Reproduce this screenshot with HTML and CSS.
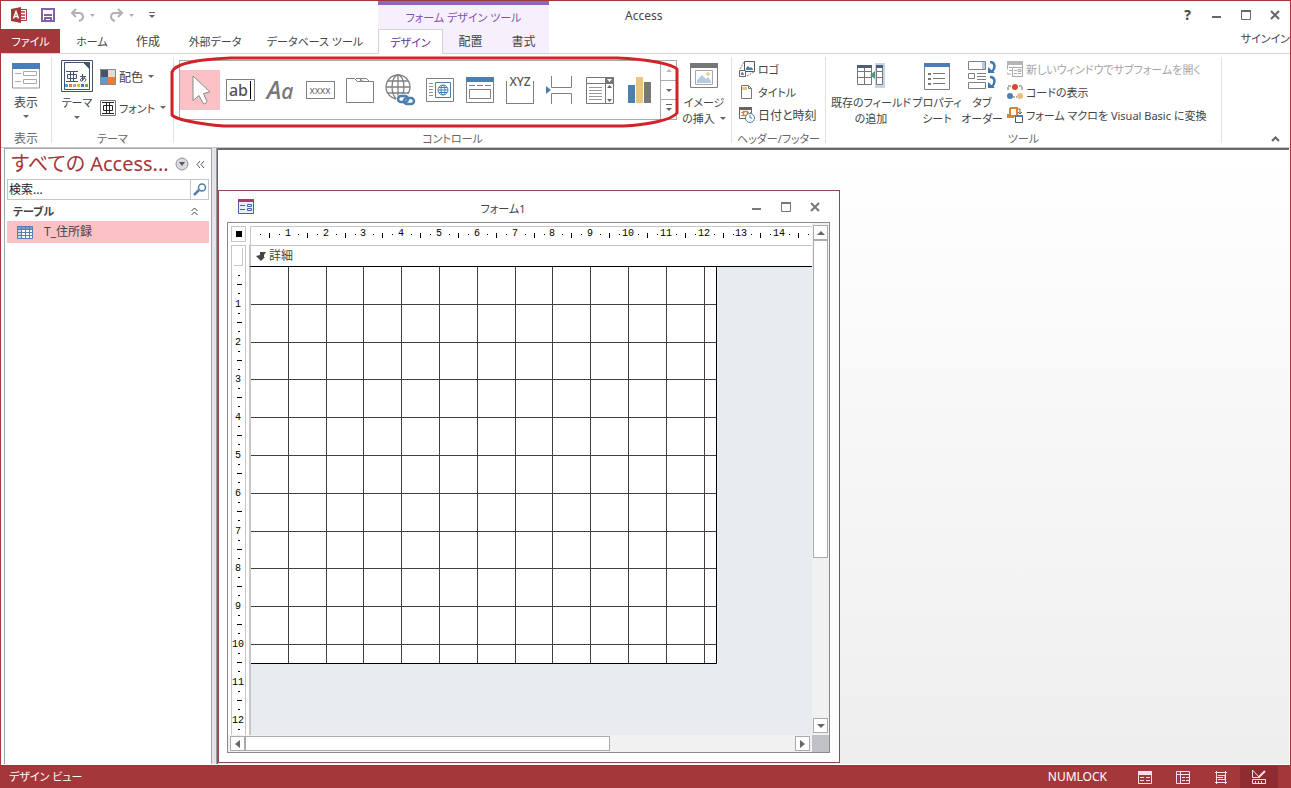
FILE: index.html
```html
<!DOCTYPE html>
<html lang="ja">
<head>
<meta charset="utf-8">
<title>Access</title>
<link rel="stylesheet" href="styles.css">
</head>
<body>
<div class="app">
<header class="header">
  <div class="header-left">
    <div class="quick">
      <svg class="logo" width="17" height="16" viewBox="0 0 17 16"><path d="M9 2.500h6.500v11H9" fill="#fff" stroke="#a4373a"/><path d="M10 5h4M10 8h4M10 11h4" stroke="#a4373a" stroke-width="1.500"/><path d="M0 2l10-2v16L0 14z" fill="#a4373a"/><path d="M2.500 11.500L5 4.500l2.500 7M3.500 9.500h3" fill="none" stroke="#fff" stroke-width="1.400"/></svg>
      <button class="tool save" aria-label="Save"><svg width="14" height="14" viewBox="0 0 14 14"><path d="M1 1h12v12H1z" fill="#fff" stroke="#8560a8" stroke-width="2"/><path d="M3 7h8M4 13V10h6v3" fill="none" stroke="#8560a8" stroke-width="2"/></svg></button>
      <button class="tool undo" aria-label="Undo"><svg width="25" height="14" viewBox="0 0 25 14"><path d="M6 1L2 5l4 4M2 5h7c3 0 4 2 4 4s-1 3-4 4" fill="none" stroke="#b0b0b0" stroke-width="2"/><path d="M20 6h5l-2.500 3z" fill="#b0b0b0"/></svg></button>
      <button class="tool redo" aria-label="Redo"><svg width="25" height="14" viewBox="0 0 25 14"><path d="M9 1l4 4-4 4M13 5H6C3 5 2 7 2 9s1 3 4 4" fill="none" stroke="#b0b0b0" stroke-width="2"/><path d="M20 6h5l-2.500 3z" fill="#b0b0b0"/></svg></button>
      <button class="tool" aria-label="Customize"><svg width="6" height="7" viewBox="0 0 6 7"><path d="M0 .500h6" stroke="#666"/><path d="M0 3h6L3 6z" fill="#666"/></svg></button>
    </div>
    <nav class="tabs">
      <button class="tab file">ファイル</button>
      <button class="tab home">ホーム</button>
      <button class="tab create">作成</button>
      <button class="tab external">外部データ</button>
      <button class="tab database">データベース ツール</button>
    </nav>
  </div>
  <div class="context">
    <div class="context-title">フォーム デザイン ツール</div>
    <nav class="tabs context-tabs">
      <button class="tab design">デザイン</button>
      <button class="tab arrange">配置</button>
      <button class="tab format">書式</button>
    </nav>
  </div>
  <div class="header-right">
    <div class="title-row">
      <h1 class="app-title">Access</h1>
      <div class="window-buttons">
        <button class="tool help" aria-label="Help">?</button>
        <button class="tool" aria-label="Minimize"><svg width="10" height="12" viewBox="0 0 10 12"><path d="M0 8h9" stroke="#666" stroke-width="2"/></svg></button>
        <button class="tool" aria-label="Maximize"><svg width="10" height="10" viewBox="0 0 10 10"><path d="M.500 .500h9v9h-9z" fill="none" stroke="#666"/><path d="M0 1h10" stroke="#666" stroke-width="2"/></svg></button>
        <button class="tool" aria-label="Close"><svg width="10" height="10" viewBox="0 0 10 10"><path d="M1 1l8 8M9 1L1 9" stroke="#666" stroke-width="2"/></svg></button>
      </div>
    </div>
    <div class="signin-row"><a class="signin" href="#">サインイン</a></div>
  </div>
</header>

<section class="ribbon">
  <div class="group view-group">
    <div class="group-body">
      <button class="big"><svg width="28" height="26" viewBox="0 0 28 26"><path d="M.500 1h27v24H.500z" fill="#fff" stroke="#999"/><path d="M0 0h28v6H0z" fill="#4a7ebb"/><path d="M11.500 8.500h13v4h-13zM11.500 16.500h13v4h-13zM3 10.500h6M3 18.500h6" fill="none" stroke="#aaa"/></svg><span>表示</span><i class="caret"></i></button>
    </div>
    <div class="group-label">表示</div>
  </div>
  <div class="group theme-group">
    <div class="group-body">
      <button class="big theme"><svg width="32" height="32" viewBox="0 0 32 32"><path d="M.500 .500h31v31H.500z" fill="#fff" stroke="#44546a"/><path d="M3.500 2.500h19l6 6v21h-25z" fill="#fff" stroke="#44546a"/><path d="M22 2h7v8z" fill="#44546a"/><path d="M5 11.500h12M5 21.500h12M9.500 11.500v10M12.500 11.500v10M6.500 14.500h9v4h-9z" fill="none" stroke="#44546a"/><path d="M19 16.500h6M21.500 14v7c-3 1-3-3 1-3 3 0 3 3 1 3.500M24 17l-3 4" fill="none" stroke="#44546a"/><path d="M4 24h3v3H4z" fill="#5b9bd5"/><path d="M8 24h3v3H8z" fill="#ed7d31"/><path d="M12 24h3v3h-3z" fill="#a5a5a5"/><path d="M16 24h3v3h-3z" fill="#e7b737"/><path d="M20 24h3v3h-3z" fill="#4472c4"/><path d="M24 24h3v3h-3z" fill="#70ad47"/></svg><span>テーマ</span><i class="caret"></i></button>
      <div class="list theme-list">
        <button class="row"><svg width="16" height="16" viewBox="0 0 16 16"><path d="M0 0h8v8H0z" fill="#44546a"/><path d="M8 0h8v8H8z" fill="#dcdcdc"/><path d="M0 8h8v8H0z" fill="#5b9bd5"/><path d="M8 8h8v8H8z" fill="#ed7d31"/><path d="M.500 .500h15v15H.500z" fill="none" stroke="#8a8a8a"/></svg><span class="kanji">配色</span><i class="caret"></i></button>
        <button class="row"><svg width="16" height="16" viewBox="0 0 16 16"><path d="M.500 .500h15v15H.500z" fill="#fff" stroke="#777"/><path d="M2 2.500h12M2 13.500h12M6.500 3v10M9.500 3v10M3.500 5.500h9v5h-9z" fill="none" stroke="#222"/></svg><span>フォント</span><i class="caret"></i></button>
      </div>
    </div>
    <div class="group-label">テーマ</div>
  </div>
  <div class="group controls-group">
    <div class="group-body">
      <div class="gallery">
        <button class="cell selected" aria-label="Select"><svg width="28" height="32" viewBox="0 0 28 32"><path d="M7 2l17 16-6.500 1.500 3.500 8q-2 4-4 1.500l-4-7.500-6 5z" fill="#fff" stroke="#8a8a8a"/></svg></button>
        <button class="cell"><span class="ctl-box ctl-ab">ab<i class="ibeam"></i></span></button>
        <button class="cell"><span class="ctl-aa">A<small>a</small></span></button>
        <button class="cell"><span class="ctl-box ctl-x">xxxx</span></button>
        <button class="cell" aria-label="Tab control"><svg width="28" height="26" viewBox="0 0 28 26"><path d="M.500 25.500V1.500h8l3 3h3v-3h6l3 3h-9M23 4.500h4.500v21H.500" fill="none" stroke="#808080"/><path d="M10 1.500h4l3 3" fill="none" stroke="#808080"/></svg></button>
        <button class="cell" aria-label="Link"><svg width="32" height="32" viewBox="0 0 32 32"><g fill="none" stroke="#808080" stroke-width="1.300"><circle cx="14" cy="13" r="12"/><ellipse cx="14" cy="13" rx="6" ry="12"/><path d="M14 1v24M2 13h24M4 7h20M4 19h20"/></g><rect x="12" y="20" width="20" height="12" rx="6" fill="#fff"/><g fill="none" stroke="#4a7fb0" stroke-width="2.500"><rect x="14" y="22" width="10" height="6" rx="3"/><rect x="20" y="24" width="10" height="6" rx="3"/></g></svg></button>
        <button class="cell" aria-label="Web browser control"><svg width="28" height="24" viewBox="0 0 28 24"><path d="M.500 .500h27v23H.500z" fill="none" stroke="#808080"/><path d="M3 5.500h4M3 8.500h4M3 11.500h4M3 14.500h4M3 17.500h4" stroke="#909090"/><path d="M9.500 4.500h15v15h-15z" fill="#fff" stroke="#4a7fb0"/><g fill="none" stroke="#4a7fb0"><circle cx="17" cy="12" r="5"/><ellipse cx="17" cy="12" rx="2" ry="5"/><path d="M12 12h10M13 9.500h8M13 14.500h8"/></g></svg></button>
        <button class="cell" aria-label="Navigation control"><svg width="28" height="26" viewBox="0 0 28 26"><path d="M.500 .500h27v25H.500z" fill="#fff" stroke="#808080"/><path d="M0 0h28v5H0z" fill="#4a7fb0"/><path d="M3 8.500h6M11 8.500h6M19 8.500h6M3.500 12.500h21v9h-21z" fill="none" stroke="#808080"/></svg></button>
        <button class="cell"><span class="ctl-frame"><span class="ctl-frame-label">XYZ</span></span></button>
        <button class="cell" aria-label="Page break"><svg class="page-break" width="26" height="28" viewBox="0 0 26 28"><path d="M5.500 0v11.500h20V0M5.500 28V17.500h20V28" fill="none" stroke="#808080"/><path d="M0 10l5 4-5 4z" fill="#4a7fb0"/></svg></button>
        <button class="cell" aria-label="Combo box"><svg width="28" height="27" viewBox="0 0 28 27"><path d="M.500 .500h27v26H.500zM0 6.500h28M19.500 0v27" fill="#fff" stroke="#777"/><path d="M3 10.500h13M3 13.500h13M3 16.500h13M3 19.500h13M3 22.500h13" stroke="#999"/><path d="M20 0h8v6h-8z" fill="#777"/><path d="M21 2h5l-2.500 3z" fill="#fff"/><path d="M21 11h5l-2.500-3zM21 22h5l-2.500 3z" fill="#666"/></svg></button>
        <button class="cell" aria-label="Chart"><svg width="24" height="26" viewBox="0 0 24 26"><path d="M0 8h7v18H0z" fill="#4a7fb0"/><path d="M8 0h7v26H8z" fill="#e8c77d"/><path d="M16 5h7v21h-7z" fill="#777"/></svg></button>
        <div class="gallery-scroll">
          <button aria-label="Scroll up"><i class="caret up faint"></i></button>
          <button aria-label="Scroll down"><i class="caret"></i></button>
          <button aria-label="More"><i class="caret more"></i></button>
        </div>
        <svg class="callout" width="512" height="76" viewBox="0 0 512 76"><path d="M3 17C6 8 32 4 62 3H448C478 4 503 9 508 14V58C503 65 478 70 454 71H55C28 69 6 64 3 60Z" fill="none" stroke="#d2232a" stroke-width="3"/></svg>
      </div>
      <button class="big image"><svg width="28" height="25" viewBox="0 0 28 25"><path d="M.500 .500h27v24H.500z" fill="#fff" stroke="#808080"/><path d="M0 0h28v5H0z" fill="#777"/><path d="M5.500 7.500h17v14h-17z" fill="#fff" stroke="#aaa"/><path d="M7 20v-3l5-5 4 4 2-2 3 4v2z" fill="#b8cae0"/><circle cx="18" cy="11" r="2" fill="#ecd59a"/></svg><span>イメージ</span><span>の挿入<i class="caret inline"></i></span></button>
    </div>
    <div class="group-label">コントロール</div>
  </div>
  <div class="group header-group">
    <div class="group-body">
      <div class="list">
        <button class="row"><svg width="16" height="16" viewBox="0 0 16 16"><path d="M5.500 .500h10v10h-10z" fill="#fff" stroke="#555"/><path d="M7 9V7l2-2 2 2 1-1 2 2v1z" fill="#4a7fb0"/><path d="M.500 9.500h6v6h-6z" fill="#fff" stroke="#666"/><path d="M2 14v-2l2-1 1 3z" fill="#4a7fb0"/><path d="M1 8l4-7M8 15l7-4" stroke="#777" stroke-dasharray="2 1"/></svg><span>ロゴ</span></button>
        <button class="row"><svg width="16" height="16" viewBox="0 0 16 16"><path d="M2.500 1.500h7l3 3v10h-10z" fill="#fff" stroke="#777"/><path d="M9.500 1.500v3h3" fill="none" stroke="#777"/><path d="M3 3h5v3H3z" fill="#e8c77d"/></svg><span>タイトル</span></button>
        <button class="row"><svg width="16" height="16" viewBox="0 0 16 16"><path d="M.500 .500h12v11H.500z" fill="#fff" stroke="#666"/><path d="M0 0h13v3H0z" fill="#666"/><path d="M2 5.500h10M2 8.500h10" stroke="#999" stroke-dasharray="2 1"/><path d="M4.500 4.500h4v4h-4z" fill="#fff" stroke="#dd8133" stroke-width="1.500"/><circle cx="11" cy="11" r="4.500" fill="#fff" stroke="#4a7fb0"/><path d="M11 8v3h2" fill="none" stroke="#4a7fb0"/></svg><span class="kanji">日付と時刻</span></button>
      </div>
    </div>
    <div class="group-label">ヘッダー/フッター</div>
  </div>
  <div class="group tools-group">
    <div class="group-body">
      <button class="big field"><svg width="28" height="25" viewBox="0 0 28 25"><path d="M18 0h10v25H18z" fill="#c5d6e8"/><path d="M.500 2.500h14v19H.500zM.500 8.500h14M.500 14.500h14M7.500 3v18M19.500 2.500h6v19h-6zM19 8.500h7M19 14.500h7" fill="#fff" stroke="#777"/><path d="M0 2h15v3H0zM19 2h7v3h-7z" fill="#4c5f75"/><path d="M13 12l5-4v8z" fill="#4d9a78"/></svg><span>既存のフィールド</span><span>の追加</span></button>
      <button class="big property"><svg width="26" height="27" viewBox="0 0 26 27"><path d="M.500 .500h25v26H.500z" fill="#fff" stroke="#808080"/><path d="M0 0h26v4H0z" fill="#4a7ebb"/><path d="M9 10.500h12M9 15.500h12M9 20.500h12" stroke="#777"/><path d="M4 10h3v2H4zM4 15h3v2H4zM4 20h3v2H4z" fill="#777"/></svg><span>プロパティ</span><span>シート</span></button>
      <button class="big order"><svg width="28" height="28" viewBox="0 0 28 28"><path d="M.500 .500h17v8H.500zM.500 12.500h6v5h-6zM.500 21.500h17v6H.500zM9 12.500h9M9 15.500h9M9 18.500h9" fill="#fff" stroke="#808080"/><path d="M14 1h3v7h-3z" fill="#b8cae0"/><path d="M22 1c5 0 6 5 2 10M22 16c5 0 6 5 2 10" fill="none" stroke="#3f77b0" stroke-width="2.500"/><path d="M20 6v6h7zM20 21v6h7z" fill="#3f77b0"/></svg><span>タブ</span><span>オーダー</span></button>
      <div class="list">
        <button class="row" disabled><svg width="16" height="16" viewBox="0 0 16 16"><path d="M.500 .500h15v12M.500 .500v8M5 15.500h10.500V6.500H5.500v9" fill="none" stroke="#aaa"/><path d="M0 0h16v4H0z" fill="#b5b5b5"/><path d="M2 6.500h3M2 9.500h3M7 9.500h3M11 8.500h3v2h-3zM7 12.500h3M11 12.500h3M0 11v2h4" fill="none" stroke="#aaa"/></svg><span>新しいウィンドウでサブフォームを開く</span></button>
        <button class="row"><svg width="16" height="16" viewBox="0 0 16 16"><path d="M4 2H1v5M12 2h3v5M5 13h5" fill="none" stroke="#666" stroke-dasharray="3 1"/><circle cx="8" cy="3" r="3" fill="#d6492e"/><circle cx="3" cy="12" r="3" fill="#4a7fb0"/><circle cx="13" cy="12" r="3" fill="#e8bd7d"/></svg><span>コードの表示</span></button>
        <button class="row"><svg width="16" height="16" viewBox="0 0 16 16"><path d="M3 1h7v8H2M3 1v7H0v2h7" fill="none" stroke="#dd8133" stroke-width="2"/><path d="M11 2h2v4M11 5l2 2 2-2" fill="none" stroke="#666"/><path d="M8.500 8.500h7v7h-7z" fill="#fff" stroke="#555"/><path d="M8 8h8v2H8z" fill="#4a7fb0"/></svg><span>フォーム マクロを Visual Basic に変換</span></button>
      </div>
    </div>
    <div class="group-label">ツール</div>
  </div>
  <button class="tool collapse" aria-label="Collapse ribbon"><svg width="9" height="6" viewBox="0 0 9 6"><path d="M1 5l3.500-3.500L8 5" fill="none" stroke="#666" stroke-width="2"/></svg></button>
</section>

<main class="workspace">
  <aside class="nav">
    <div class="nav-head">
      <h2 class="nav-title">すべての Access...</h2>
      <button class="tool" aria-label="Choose category"><svg width="14" height="14" viewBox="0 0 14 14"><circle cx="7" cy="7" r="6" fill="#d9d9df" stroke="#92929a"/><path d="M4 5h6L7 9z" fill="#555"/></svg></button>
      <button class="tool" aria-label="Close pane"><svg width="9" height="9" viewBox="0 0 9 9"><path d="M4 1L1 4.500 4 8M8 1L5 4.500 8 8" fill="none" stroke="#555"/></svg></button>
    </div>
    <div class="search">
      <input class="search-input" type="text" placeholder="検索..." aria-label="検索">
      <button class="search-button" aria-label="Search"><svg width="14" height="13" viewBox="0 0 14 13"><circle cx="9" cy="4.500" r="3.500" fill="#fff" stroke="#4a7fb0" stroke-width="1.500"/><path d="M6 7l-5 5" stroke="#4a7fb0" stroke-width="2.500"/></svg></button>
    </div>
    <button class="category"><span>テーブル</span><svg width="7" height="9" viewBox="0 0 7 9"><path d="M.500 4l3-3 3 3M.500 8l3-3 3 3" fill="none" stroke="#444"/></svg></button>
    <button class="object"><svg width="16" height="13" viewBox="0 0 16 13"><path d="M0 0h16v13H0z" fill="#fff"/><path d="M0 0h16v4H0z" fill="#7f9ccc"/><path d="M0 4h4v9H0z" fill="#c9d8ef"/><path d="M.500 .500h15v12H.500zM0 3.500h16M0 6.500h16M0 9.500h16M4.500 0v13M8.500 0v13M12.500 0v13" fill="none" stroke="#5b7db5"/></svg><span>T_住所録</span></button>
  </aside>
  <div class="splitter"></div>
  <div class="mdi">
    <section class="form-window">
      <div class="form-title">
        <svg class="form-icon" width="16" height="15" viewBox="0 0 16 15"><path d="M.500 .500h15v14H.500z" fill="#e9effa" stroke="#4a62a8"/><path d="M0 0h16v3H0z" fill="#b0395c"/><path d="M2 6.500h5M2 10.500h5M9.500 5.500h4v2h-4zM9.500 9.500h4v2h-4z" fill="none" stroke="#4a62a8"/></svg>
        <span class="form-name">フォーム1</span>
        <div class="form-buttons">
          <button class="tool" aria-label="Minimize form"><svg width="10" height="12" viewBox="0 0 10 12"><path d="M0 8h9" stroke="#777" stroke-width="2"/></svg></button>
          <button class="tool" aria-label="Maximize form"><svg width="10" height="10" viewBox="0 0 10 10"><path d="M.500 .500h9v9h-9z" fill="none" stroke="#777"/><path d="M0 1h10" stroke="#777" stroke-width="2"/></svg></button>
          <button class="tool" aria-label="Close form"><svg width="10" height="10" viewBox="0 0 10 10"><path d="M1 1l8 8M9 1L1 9" stroke="#777" stroke-width="2"/></svg></button>
        </div>
      </div>
      <div class="form-frame">
        <div class="select-corner"><i></i></div>
        <div class="ruler-top">
          <svg width="562" height="18" viewBox="0 2 562 18"><defs><path id="h" d="M9 9.500h1M18.500 8v5M28 9.500h1" fill="none" stroke="#000"/></defs>
          <use href="#h"/><use href="#h" x="38"/><use href="#h" x="76"/><use href="#h" x="113"/><use href="#h" x="151"/><use href="#h" x="189"/><use href="#h" x="227"/><use href="#h" x="265"/><use href="#h" x="302"/><use href="#h" x="340"/><use href="#h" x="378"/><use href="#h" x="416"/><use href="#h" x="454"/><use href="#h" x="491"/><use href="#h" x="529"/>
          <g class="ruler-text"><text x="37" y="11">1</text><text x="75" y="11">2</text><text x="112" y="11">3</text><text x="150" y="11">4</text><text x="188" y="11">5</text><text x="226" y="11">6</text><text x="264" y="11">7</text><text x="301" y="11">8</text><text x="339" y="11">9</text><text x="377" y="11">10</text><text x="415" y="11">11</text><text x="453" y="11">12</text><text x="490" y="11">13</text><text x="528" y="11">14</text></g></svg>
        </div>
        <div class="section-selector"><i></i></div>
        <div class="section-bar"><svg width="10" height="9" viewBox="0 0 10 9"><path d="M4 0h6L8 3v2h1L5 9 0 4l4-1z" fill="#444"/></svg><span>詳細</span></div>
        <div class="ruler-side">
          <svg width="14" height="468" viewBox="0 1 14 468"><defs><path id="v" d="M6 9.500h2M5 18.500h5M6 27.500h2" fill="none" stroke="#000"/></defs>
          <use href="#v"/><use href="#v" y="38"/><use href="#v" y="76"/><use href="#v" y="113"/><use href="#v" y="151"/><use href="#v" y="189"/><use href="#v" y="227"/><use href="#v" y="265"/><use href="#v" y="302"/><use href="#v" y="340"/><use href="#v" y="378"/><use href="#v" y="416"/><path d="M6 463.500h2" stroke="#000"/>
          <g class="ruler-text"><text x="6" y="41">1</text><text x="6" y="79">2</text><text x="6" y="116">3</text><text x="6" y="154">4</text><text x="6" y="192">5</text><text x="6" y="230">6</text><text x="6" y="268">7</text><text x="6" y="305">8</text><text x="6" y="343">9</text><text x="6" y="381">10</text><text x="6" y="419">11</text><text x="6" y="457">12</text></g></svg>
        </div>
        <div class="canvas">
          <svg width="466" height="397" viewBox="1 1 466 397"><path d="M0 0h467v398H0z" fill="#fff"/><path d="M38.500 0v398M76.500 0v398M113.500 0v398M151.500 0v398M189.500 0v398M227.500 0v398M265.500 0v398M302.500 0v398M340.500 0v398M378.500 0v398M416.500 0v398M454.500 0v398M0 38.500h467M0 76.500h467M0 113.500h467M0 151.500h467M0 189.500h467M0 227.500h467M0 265.500h467M0 302.500h467M0 340.500h467M0 378.500h467" fill="none" stroke="#404040"/><path d="M0 397.500h466.500V0" fill="none" stroke="#000"/></svg>
        </div>
        <div class="vscroll"><button class="scroll-button" aria-label="Up"><i class="caret up wide"></i></button><div class="vthumb"></div><button class="scroll-button" aria-label="Down"><i class="caret wide"></i></button></div>
        <div class="hscroll"><button class="scroll-button" aria-label="Left"><svg width="5" height="8" viewBox="0 0 5 8"><path d="M5 0v8L0 4z" fill="#666"/></svg></button><div class="hthumb"></div><button class="scroll-button" aria-label="Right"><svg width="5" height="8" viewBox="0 0 5 8"><path d="M0 0v8l5-4z" fill="#666"/></svg></button></div>
        <div class="grip"></div>
      </div>
    </section>
  </div>
</main>

<footer class="status">
  <span class="status-view">デザイン ビュー</span>
  <span class="numlock">NUMLOCK</span>
  <button class="view-button" aria-label="Form view"><svg width="14" height="13" viewBox="0 0 14 13"><path d="M.500 .500h13v12H.500z" fill="none" stroke="#fde"/><path d="M0 0h14v4H0z" fill="#fde"/><path d="M2 6.500h4M8 6.500h4M2 9.500h4M8 9.500h4" stroke="#fde"/></svg></button>
  <button class="view-button" aria-label="Datasheet view"><svg width="14" height="13" viewBox="0 0 14 13"><path d="M.500 .500h13v12H.500zM0 3.500h14M4.500 0v13M6 6.500h3M10 6.500h3M6 9.500h3M10 9.500h3" fill="none" stroke="#fde"/></svg></button>
  <button class="view-button" aria-label="Layout view"><svg width="12" height="13" viewBox="0 0 12 13"><path d="M1.500 0v13M10.500 0v13M0 1.500h12M0 11.500h12M3 4.500h7v4H3M1 6.500h7" fill="none" stroke="#fde"/></svg></button>
  <button class="view-button current" aria-label="Design view"><svg width="14" height="14" viewBox="0 0 14 14"><path d="M.500 0v7.500h7zM.500 9.500h13v4H.500zM3.500 11v2M6.500 11v2M9.500 11v2" fill="none" stroke="#fde"/><path d="M13 1L7 7" stroke="#fde" stroke-width="2"/></svg></button>
</footer>
</div>
</body>
</html>
```
FILE: styles.css
```css
* { box-sizing: border-box; }
body {
  margin: 0;
  font: 12px/16px "Noto Sans", "Noto Sans CJK JP", sans-serif;
  font-feature-settings: "palt";
  color: #444;
}
button, input { font: inherit; font-feature-settings: inherit; color: inherit; }
button { display: flex; align-items: center; justify-content: center; margin: 0; padding: 0; border: 0; background: none; white-space: nowrap; }
svg { display: block; flex: none; }
h1, h2 { margin: 0; font-weight: 400; }

.app { display: flex; flex-direction: column; min-height: 100vh; border: solid #a4373a; border-width: 1px 1px 0; background: #fff; overflow: hidden; }

/* title bar and tabs */
.header { display: flex; height: 53px; flex: none; }
.header-left { display: flex; flex-direction: column; width: 377px; flex: none; }
.quick { display: flex; align-items: center; height: 28px; padding-left: 10px; }
.save { margin-left: 13px; }
.undo { margin-left: 15px; }
.redo { margin: 0 15px 0 14px; }
.tabs { display: flex; height: 25px; border-bottom: 1px solid #d4d4d4; font-size: 11px; }
.tab { flex: none; height: 24px; padding-top: 2px; }
.file { width: 59px; margin-right: 2px; background: #a4373a; color: #fff; }
.home { width: 60px; }
.create { width: 52px; font-size: 12px; }
.external { width: 82px; }
.database { width: 118px; }
.context { display: flex; flex-direction: column; width: 171px; flex: none; background: #f5f0fb; border-top: 4px solid #9264bd; }
.context-title { height: 24px; line-height: 26px; font-size: 11px; text-align: center; color: #8551b0; }
.design { width: 65px; height: 25px; border: 1px solid #d4d4d4; border-bottom: 0; background: #fff; color: #6b2f98; }
.arrange { width: 55px; font-size: 12px; }
.format { width: 51px; font-size: 12px; }
.header-right { display: flex; flex-direction: column; flex: 1; border-bottom: 1px solid #d4d4d4; }
.title-row { display: flex; justify-content: space-between; height: 28px; padding: 0 10px 0 76px; }
.app-title { font-size: 12px; line-height: 30px; }
.window-buttons, .form-buttons { display: flex; align-items: center; gap: 19px; }
.help { font-weight: 700; font-size: 14px; margin-right: 2px; }
.signin-row { display: flex; justify-content: flex-end; line-height: 20px; font-size: 11px; }
.signin { color: inherit; text-decoration: none; }

/* ribbon */
.ribbon { display: flex; height: 94px; flex: none; border-bottom: 1px solid #c8c8c8; font-size: 11px; }
.kanji, .view-group { font-size: 12px; }
.group { display: flex; flex-direction: column; margin: 3px 0 4px; border-right: 1px solid #e1e1e1; flex: none; }
.group-body { display: flex; flex: 1; }
.group-label { height: 16px; margin-bottom: -4px; text-align: center; white-space: nowrap; color: #666; }
.view-group { width: 51px; }
.theme-group { width: 122px; }
.controls-group { width: 558px; }
.header-group { width: 94px; }
.header-group .group-body { padding-left: 7px; }
.tools-group { width: 396px; }
.tools-group .group-body { padding-left: 4px; }
.big { flex-direction: column; justify-content: flex-start; padding-top: 6px; align-self: flex-start; flex: none; }
.big svg { margin-bottom: 6px; }
.view-group .big { width: 50px; }
.view-group .caret, .theme .caret { margin-top: 4px; }
.theme { width: 34px; margin-left: 8px; padding-top: 3px; }
.theme .caret { margin-top: 5px; }
.theme svg { margin-bottom: 3px; }
.image { width: 54px; }
.image svg { margin-bottom: 7px; }
.field { width: 82px; }
.property { width: 50px; }
.field svg { margin-bottom: 7px; }
.property svg { margin-bottom: 5px; }
.order { width: 40px; padding-top: 4px; }
.list { display: flex; flex-direction: column; flex: 1; }
.row { justify-content: flex-start; height: 23px; gap: 3px; }
.row span { padding-top: 2px; }
.row .caret { margin-left: 2px; }
.row:disabled { color: #a6a6a6; }
.theme-list { padding: 4px 0 0 6px; }
.theme-list .row { height: 31px; }
.tools-group .list { padding-left: 5px; }
.caret { width: 0; height: 0; border: solid transparent; border-width: 3px 3px 0; border-top-color: #666; flex: none; }
.caret.up { border-width: 0 3px 3px; border-bottom-color: #666; }
.caret.wide { border-left-width: 4px; border-right-width: 4px; }
.caret.wide:not(.up) { border-top-width: 4px; }
.caret.wide.up { border-bottom-width: 4px; }
.caret.faint { border-bottom-color: #bbb; }
.caret.inline { display: inline-block; margin: 0 0 3px 5px; }
.caret.more { box-shadow: 0 -3px #fff, 0 -4px #666; }
.collapse { align-self: flex-end; margin: 0 10px 5px auto; }

/* control gallery */
.gallery { position: relative; display: flex; align-items: center; width: 498px; height: 60px; margin: 3px 0 0 5px; border: 1px solid #ababab; flex: none; }
.cell { width: 40px; height: 40px; flex: none; }
.selected { background: #fbc1c4; }
.ctl-box { display: flex; align-items: center; justify-content: center; width: 29px; height: 22px; border: 1px solid #808080; color: #666; }
.ctl-ab { font-size: 16px; color: #555; font-weight: 500; }
.ibeam { width: 1px; height: 18px; margin-left: 2px; background: #000; }
.ctl-x { height: 18px; font-size: 10px; }
.ctl-aa { font-size: 25px; font-style: italic; font-weight: 500; color: #777; }
.ctl-aa small { font-size: 21px; }
.ctl-frame { width: 28px; height: 23px; margin-top: 5px; border: 1px solid #808080; border-top: 0; font-size: 12px; line-height: 2px; font-weight: 500; color: #555; }
.page-break { margin-right: 3px; }
.gallery-scroll { display: flex; flex-direction: column; align-self: stretch; flex: 1; border-left: 1px solid #ababab; }
.gallery-scroll button { flex: 1; }
.gallery-scroll button + button { border-top: 1px solid #ababab; }
.callout { position: absolute; left: -11px; top: -6px; pointer-events: none; }

/* navigation pane */
.workspace { display: flex; flex: 1; padding: 0 1px 1px 3px; }
.nav { width: 208px; flex: none; border: 1px solid #a5a5ad; border-bottom: 0; padding: 0 2px; }
.nav-head { display: flex; align-items: center; height: 30px; gap: 7px; padding-left: 4px; }
.nav-title { width: 164px; margin-right: -7px; font-size: 20px; line-height: 28px; color: #a4373a; white-space: nowrap; }
.search { display: flex; height: 21px; border: 1px solid #c6c6c6; }
.search-input { flex: 1; min-width: 0; padding: 0 1px; border: 0; outline: 0; }
.search-input::placeholder { color: #222; opacity: 1; }
.search-button { width: 18px; border-left: 1px solid #c6c6c6; }
.category { justify-content: space-between; width: 100%; height: 21px; padding: 2px 11px 0 6px; font-size: 11px; font-weight: 700; }
.object { justify-content: flex-start; width: 100%; height: 22px; padding-left: 10px; gap: 11px; background: #fbc1c4; }
.splitter { width: 5px; flex: none; background: #e4e4ea; border-right: 1px solid #999; }

/* form window */
.mdi { position: relative; flex: 1; border: solid #696969; border-width: 2px 0 0 1px; background: linear-gradient(#fff, #eee); }
.form-window { position: absolute; left: 0; top: 40px; width: 622px; padding: 0 9px 9px 8px; border: 1px solid #8a4a50; background: #fff; }
.form-title { display: flex; align-items: center; height: 31px; padding: 0 10px 0 11px; }
.form-name { flex: 1; padding-top: 4px; font-size: 11px; text-align: center; }
.form-frame { display: grid; grid-template-columns: 4px 14px 5px 1fr 17px; grid-template-rows: 22px 22px 468px 17px; border: 1px solid #8a8a8a; }
.select-corner { display: flex; align-items: center; justify-content: center; grid-area: 1 / 1 / 2 / 3; margin: 3px 0 3px 3px; border: 1px solid #c6c6c6; }
.select-corner i { width: 6px; height: 6px; background: #000; }
.ruler-top { grid-area: 1 / 4; margin: 3px 0 0 -1px; border: solid #c6c6c6; border-width: 1px 0 0 1px; overflow: hidden; }
.ruler-text { font: 10px "Liberation Mono", monospace; fill: #000; text-anchor: middle; }
.section-selector { grid-area: 2 / 1 / 3 / 3; margin-left: 3px; padding: 2px; border: solid #c6c6c6; border-width: 1px 1px 0; }
.section-selector i { display: block; height: 18px; border: solid #c6c6c6; border-width: 0 1px 1px 0; }
.section-bar { display: flex; align-items: center; gap: 3px; grid-area: 2 / 4; margin-left: -2px; padding-left: 5px; border: solid #c6c6c6; border-width: 1px 0 0 2px; border-bottom: 1px solid #000; }
.ruler-side { grid-area: 3 / 1 / 4 / 3; margin-left: 3px; border: solid #c6c6c6; border-width: 0 1px; }
.canvas { grid-area: 3 / 4; margin-left: -2px; border-left: 2px solid #c6c6c6; background: #e8ebf0; }
.vscroll { display: flex; flex-direction: column; grid-area: 1 / 5 / 4 / 6; padding: 2px 1px; background: #f1f1f1; }
.hscroll { display: flex; grid-area: 4 / 1 / 5 / 5; padding: 1px 2px; background: #f1f1f1; }
.scroll-button { width: 15px; height: 15px; flex: none; border: 1px solid #ababab; background: #fff; }
.vthumb { height: 318px; margin-bottom: auto; border: 1px solid #ababab; background: #fff; }
.hthumb { width: 365px; margin-right: auto; border: 1px solid #ababab; background: #fff; }
.grip { grid-area: 4 / 5; background: #c0c2c8; }

/* status bar */
.status { display: flex; align-items: center; height: 23px; flex: none; padding: 0 12px 0 8px; background: #a4373a; color: #fff; border-top: 1px solid #8c3a3e; }
.status-view { font-size: 11px; }
.numlock { margin: 0 19px 0 auto; }
.view-button { width: 38px; height: 22px; }
.current { background: #8e2c30; }
```
